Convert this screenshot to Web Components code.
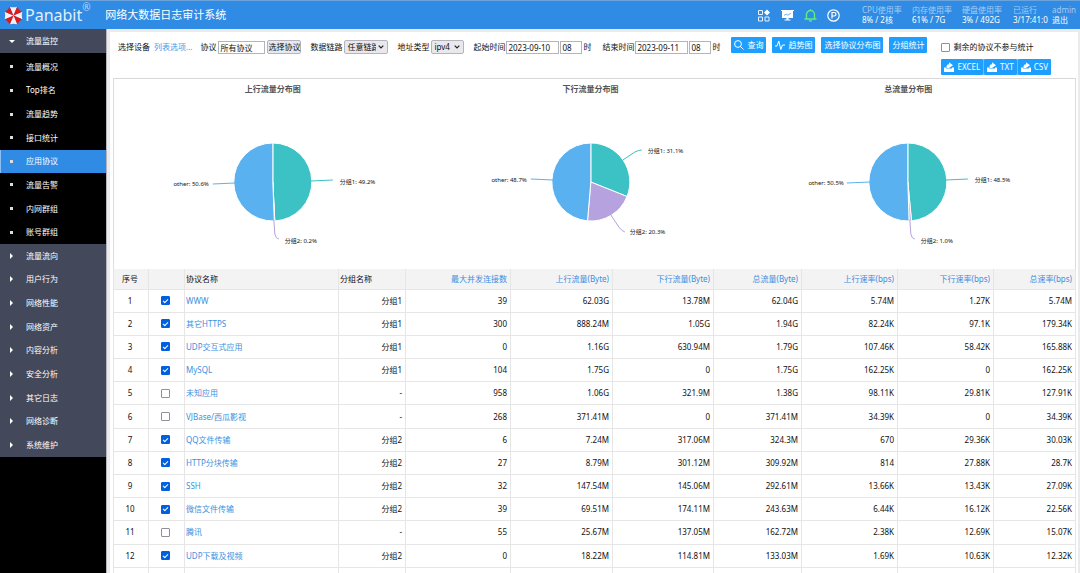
<!DOCTYPE html>
<html lang="zh-CN">
<head>
<meta charset="UTF-8">
<title>网络大数据日志审计系统</title>
<style>
    body {
        margin: 0;
        height: 100vh;
        overflow: hidden;
        font-family: "Noto Sans", "Noto Sans CJK SC", sans-serif;
        font-size: 8px;
        line-height: 12px;
        color: #111;
        background: #ebebee;
    }
</style>
</head>
<body>
<audit-app></audit-app>

<script>
class AuditApp extends HTMLElement {
    constructor() {
        super();
        this.attachShadow({ mode: 'open' });
        this.shadowRoot.innerHTML = `
            <style>
                :host {
                    display: flex;
                    flex-direction: column;
                    height: 100%;
                }
                .body {
                    display: flex;
                    flex: 1;
                    min-height: 0;
                }
                main {
                    flex: 1;
                    min-width: 0;
                    margin: 3px 2px 0 3px;
                    padding: 0 2px 0 3px;
                    background: #fff;
                    overflow: hidden;
                }
                .charts {
                    display: flex;
                    border: 1px solid #ddd;
                    border-top-color: #d8d8d8;
                    border-bottom: none;
                    padding-right: 8px;
                }
                pie-chart { flex: 1; }
            </style>
            <app-header></app-header>
            <div class="body">
                <side-menu></side-menu>
                <main>
                    <filter-bar></filter-bar>
                    <section class="charts">
                        <pie-chart data-key="up">上行流量分布图</pie-chart>
                        <pie-chart data-key="down">下行流量分布图</pie-chart>
                        <pie-chart data-key="total">总流量分布图</pie-chart>
                    </section>
                    <protocol-table></protocol-table>
                </main>
            </div>
        `;
    }
}

class AppHeader extends HTMLElement {
    constructor() {
        super();
        this.attachShadow({ mode: 'open' });
        this.render();
    }

    get logo() {
        // umbrella: eight wedges, alternating red and white
        const point = (deg, r) => {
            const a = deg * Math.PI / 180;
            return `${(10 + r * Math.cos(a)).toFixed(2)} ${(10 + r * Math.sin(a)).toFixed(2)}`;
        };
        let wedges = '';
        for (let i = 0; i < 8; i++) {
            const from = i * 45 - 22.5;
            wedges += `<path d="M10 10L${point(from, 10)}Q${point(from + 22.5, 8)} ${point(from + 45, 10)}Z" fill="${i % 2 ? '#e01818' : '#f6f0f2'}"/>`;
        }
        return `<svg class="logo" viewBox="0 0 20 20">${wedges}</svg>`;
    }

    render() {
        this.shadowRoot.innerHTML = `
            <style>
                :host {
                    display: flex;
                    align-items: center;
                    box-sizing: border-box;
                    height: 29px;
                    padding: 0 4px;
                    border-top: 1px solid #6ca5dd;
                    background: #2f8be4;
                    color: #fff;
                }
                .logo { width: 19px; height: 19px; margin-right: 2px; }
                .brand { font-size: 16px; line-height: 24px; color: #e3effc; }
                sup { align-self: flex-start; width: 23px; font-size: 10px; color: #b9d7f7; }
                h1 { margin: 0; font-size: 11px; font-weight: 400; line-height: 16px; }
                .icons { display: flex; align-items: center; gap: 10px; margin: 0 22px 0 auto; }
                .icons svg { display: block; width: 13px; height: 13px; }
                dl {
                    display: grid;
                    grid-template-columns: 50px 50px 51px 39px 24px;
                    margin: 0;
                    line-height: 10px;
                    white-space: nowrap;
                }
                dt { color: #a6cbf3; }
                dd { margin: 0; }
                a { color: inherit; text-decoration: none; }
            </style>
            ${this.logo}
            <span class="brand">Panabit</span><sup>®</sup>
            <h1>网络大数据日志审计系统</h1>
            <div class="icons">
                <svg viewBox="0 0 13 13" fill="none" stroke="#e6f1fd">
                    <path d="M.5 1.500h4v4h-4zM.5 8h4v4h-4zM7 8h4v4H7z"/>
                    <path d="M9 .5l3 3-3 3-3-3z" fill="#fff" stroke="none"/>
                </svg>
                <svg viewBox="0 0 13 13">
                    <path d="M0 1h13v1h-1v7H7.500v1.500H9.500v1h-6v-1h2V9H1V2H0z" fill="#fff"/>
                    <path d="M3 6.500l2-1.500 2 1.200 3-2.200" fill="none" stroke="#75b2ee"/>
                </svg>
                <svg viewBox="0 0 13 13" fill="none" stroke="#5df07c" stroke-width="1.400">
                    <path d="M.5 10h12M2.500 10V5.500a4 4 0 0 1 8 0V10M6.500 1.500V.3M5 11.500q1.500 1 3 0"/>
                </svg>
                <svg viewBox="0 0 13 13" fill="none" stroke="#fff" stroke-width="1.200">
                    <circle cx="6.500" cy="6.500" r="5.700"/>
                    <path d="M5 9.500v-6h2.200a1.700 1.700 0 0 1 0 3.500H5"/>
                </svg>
            </div>
            <dl>
                <dt>CPU使用率</dt><dt>内存使用率</dt><dt>硬盘使用率</dt><dt>已运行</dt><dt>admin</dt>
                <dd>8% / 2核</dd><dd>61% / 7G</dd><dd>3% / 492G</dd><dd>3/17:41:0</dd><dd><a href="#">退出</a></dd>
            </dl>
        `;
    }
}

class SideMenu extends HTMLElement {
    constructor() {
        super();
        this.attachShadow({ mode: 'open' });
        this.active = '应用协议';
        this.pages = ['流量概况', 'Top排名', '流量趋势', '接口统计', '应用协议', '流量告警', '内网群组', '账号群组'];
        this.groups = ['流量流向', '用户行为', '网络性能', '网络资产', '内容分析', '安全分析', '其它日志', '网络诊断', '系统维护'];
        this.render();
    }

    link(text, icon) {
        return `<a href="#" class="${text === this.active ? 'active' : ''}"><i class="${icon}"></i>${text}</a>`;
    }

    render() {
        this.shadowRoot.innerHTML = `
            <style>
                :host {
                    display: block;
                    flex: none;
                    width: 107px;
                    background: #000;
                    border-right: 1px solid #b5b5bd;
                    box-sizing: border-box;
                }
                a {
                    display: flex;
                    align-items: center;
                    color: #fff;
                    text-decoration: none;
                }
                .open, .groups { background: #43495b; }
                .open a { height: 24px; }
                .sub, .groups { display: grid; grid-auto-rows: 1fr; }
                .sub { box-sizing: border-box; height: 191px; padding-top: 2px; }
                .groups { height: 213px; }
                .active { background: #2f8be4; box-shadow: inset 1px 0 #8cc0f4; }
                i { box-sizing: border-box; width: 26px; padding-left: 9px; }
                i::before { content: ""; display: block; width: 0; }
                .down::before { border: 3px solid transparent; border-top-color: #fff; border-bottom: none; }
                .right::before { margin-left: 1px; border: 3px solid transparent; border-left-color: #fff; border-right: none; }
                .dot::before { width: 3px; height: 3px; margin-left: 1px; background: #ddd; }
            </style>
            <nav>
                <div class="open">${this.link('流量监控', 'down')}</div>
                <div class="sub">${this.pages.map(t => this.link(t, 'dot')).join('')}</div>
                <div class="groups">${this.groups.map(t => this.link(t, 'right')).join('')}</div>
            </nav>
        `;
    }
}

class ActionButton extends HTMLElement {
    constructor() {
        super();
        this.attachShadow({ mode: 'open' });
        this.shadowRoot.innerHTML = `
            <style>
                :host { display: inline-flex; }
                button {
                    display: flex;
                    align-items: center;
                    justify-content: center;
                    gap: 3px;
                    width: 100%;
                    height: 16px;
                    padding: 0 3px;
                    border: none;
                    border-radius: 1px;
                    background: #1e9fff;
                    color: #fff;
                    font: inherit;
                    white-space: nowrap;
                }
            </style>
            <button type="button"><slot name="icon"></slot><slot></slot></button>
        `;
    }
}

class FilterBar extends HTMLElement {
    constructor() {
        super();
        this.attachShadow({ mode: 'open' });
        this.render();
    }

    select(id, text) {
        return `
            <span class="select">
                <select id="${id}"><option>${text}</option></select>
                <svg viewBox="0 0 6 4"><path d="M.7.7L3 3 5.300.7" fill="none" stroke="#222" stroke-width="1.200"/></svg>
            </span>`;
    }

    exportButton(text) {
        return `
            <action-button>
                <svg slot="icon" viewBox="0 0 10 10" fill="#fff"><path d="M0 5.500h2v1h6v-1h2V10H0zM2.500 6V4.500Q2.500 2.200 5 2.200V.2L9 3.200 5 6z"/></svg>
                ${text}
            </action-button>`;
    }

    render() {
        this.shadowRoot.innerHTML = `
            <style>
                :host {
                    display: flex;
                    align-items: flex-start;
                    height: 46px;
                    padding: 5px 0 0 5px;
                    box-sizing: border-box;
                    white-space: nowrap;
                }
                .group, .actions {
                    display: flex;
                    align-items: center;
                    flex: none;
                    gap: 2px;
                    height: 20px;
                    margin-right: 9px;
                }
                .group.first { gap: 4px; margin-right: 8px; }
                .group.time { gap: 1px; margin-right: 11px; }
                .actions { height: 16px; gap: 6px; margin-right: 14px; }
                a { color: #4a9ae8; text-decoration: none; }
                input[type=text], select, .plain {
                    box-sizing: border-box;
                    height: 13px;
                    margin: 0;
                    padding: 0 1px;
                    border: 1px solid #b4b4bc;
                    font: inherit;
                    color: inherit;
                    background: #fff;
                }
                .plain, select { border-radius: 2px; background: #e9e9ed; }
                .plain { width: 34px; height: 14px; line-height: 10px; padding: 0; }
                .select { display: grid; align-items: center; }
                .select > * { grid-area: 1 / 1; }
                .select svg { justify-self: end; width: 6px; height: 4px; margin-right: 4px; pointer-events: none; }
                select { appearance: none; height: 14px; padding: 0 11px 0 2px; overflow: hidden; }
                #link { width: 44px; }
                #addr { width: 33px; }
                #proto { width: 47px; }
                .date { width: 53px; }
                .hour { width: 22px; }
                svg[slot=icon] { width: 10px; height: 10px; }
                .side { display: flex; flex-direction: column; gap: 2px; }
                .check { display: flex; align-items: center; gap: 3px; height: 20px; }
                .check input {
                    appearance: none;
                    width: 9px;
                    height: 9px;
                    margin: 0;
                    border: 1px solid #8f8f9d;
                    border-radius: 1px;
                }
                .exports { display: flex; }
                .exports action-button + action-button { border-left: 1px solid #67bcff; }
            </style>
            <div class="group first">选择设备 <a href="#">列表选项...</a></div>
            <div class="group">
                <label for="proto">协议</label>
                <input type="text" id="proto" value="所有协议">
                <button type="button" class="plain">选择协议</button>
            </div>
            <div class="group"><label for="link">数据链路</label>${this.select('link', '任意链路')}</div>
            <div class="group"><label for="addr">地址类型</label>${this.select('addr', 'ipv4')}</div>
            <div class="group time">
                <label for="from">起始时间</label>
                <input type="text" id="from" class="date" value="2023-09-10">
                <input type="text" class="hour" id="from-hour" value="08"><label for="from-hour">时</label>
            </div>
            <div class="group time">
                <label for="to">结束时间</label>
                <input type="text" id="to" class="date" value="2023-09-11">
                <input type="text" class="hour" id="to-hour" value="08"><label for="to-hour">时</label>
            </div>
            <div class="actions">
                <action-button><svg slot="icon" viewBox="0 0 10 10" fill="none" stroke="#fff"><circle cx="4" cy="4" r="3.400"/><path d="M6.500 6.500l3 3"/></svg>查询</action-button>
                <action-button><svg slot="icon" viewBox="0 0 10 10" fill="none" stroke="#fff"><path d="M0 6h2l1.800-5 2 8.500L7.500 5H10"/></svg>趋势图</action-button>
                <action-button>选择协议分布图</action-button>
                <action-button>分组统计</action-button>
            </div>
            <div class="side">
                <label class="check"><input type="checkbox">剩余的协议不参与统计</label>
                <div class="exports">${['EXCEL', 'TXT', 'CSV'].map(t => this.exportButton(t)).join('')}</div>
            </div>
        `;
    }
}

// leader lines and label anchors are relative to the centre of the pie
const PIES = {
    up: [
        { name: '分组1', value: 49.2, color: '#3cc1c4', line: 'M38 -1L60 -2', x: 67, y: 0 },
        { name: '分组2', value: 0.2, color: '#b6a2de', line: 'M1 38L2 52Q3 57 6 57', x: 12, y: 59 },
        { name: 'other', value: 50.6, color: '#5ab1ef', line: 'M-38 1L-60 2', x: -64, y: 2 }
    ],
    down: [
        { name: '分组1', value: 31.1, color: '#3cc1c4', line: 'M32 -22L44 -30Q48 -32 51 -32', x: 57, y: -31 },
        { name: '分组2', value: 20.3, color: '#b6a2de', line: 'M20 33L28 45Q31 49 34 50', x: 39, y: 50 },
        { name: 'other', value: 48.7, color: '#5ab1ef', line: 'M-38 -2L-60 -3', x: -64, y: -2 }
    ],
    total: [
        { name: '分组1', value: 48.5, color: '#3cc1c4', line: 'M38 -2L60 -3', x: 67, y: -2 },
        { name: '分组2', value: 1.0, color: '#b6a2de', line: 'M2 38L3 52Q4 57 7 57', x: 13, y: 59 },
        { name: 'other', value: 50.5, color: '#5ab1ef', line: 'M-38 0L-61 1', x: -64, y: 1 }
    ]
};

class PieChart extends HTMLElement {
    constructor() {
        super();
        this.attachShadow({ mode: 'open' });
    }

    connectedCallback() {
        this.render(PIES[this.dataset.key]);
    }

    slice(start, end, color) {
        const r = 39;
        const at = v => {
            const a = v * 2 * Math.PI;
            return `${(r * Math.sin(a)).toFixed(2)} ${(-r * Math.cos(a)).toFixed(2)}`;
        };
        return `<path d="M0 0L${at(start)}A${r} ${r} 0 ${end - start > 0.5 ? 1 : 0} 1 ${at(end)}Z" fill="${color}" stroke="#fff"/>`;
    }

    render(items) {
        const total = items.reduce((sum, item) => sum + item.value, 0);
        let start = 0;
        let slices = '';
        let labels = '';
        items.forEach(item => {
            const end = start + item.value / total;
            slices += this.slice(start, end, item.color);
            labels += `
                <path d="${item.line}" fill="none" stroke="${item.color}"/>
                <text x="${item.x}" y="${item.y + 2}" text-anchor="${item.x < 0 ? 'end' : 'start'}">${item.name}: ${item.value.toFixed(1)}%</text>`;
            start = end;
        });
        this.shadowRoot.innerHTML = `
            <style>
                :host { display: block; }
                h2 { margin: 0; font-size: 8px; line-height: 20px; text-align: center; color: #555; }
                svg { display: block; width: 100%; height: 170px; }
                text { font-size: 6px; fill: #111; }
            </style>
            <h2><slot></slot></h2>
            <svg viewBox="-158 -83 316 170">${slices}${labels}</svg>
        `;
    }
}

const COLUMNS = ['最大并发连接数', '上行流量(Byte)', '下行流量(Byte)', '总流量(Byte)', '上行速率(bps)', '下行速率(bps)', '总速率(bps)'];

const ROWS = [
    ['WWW', '分组1', '39', '62.03G', '13.78M', '62.04G', '5.74M', '1.27K', '5.74M'],
    ['其它HTTPS', '分组1', '300', '888.24M', '1.05G', '1.94G', '82.24K', '97.1K', '179.34K'],
    ['UDP交互式应用', '分组1', '0', '1.16G', '630.94M', '1.79G', '107.46K', '58.42K', '165.88K'],
    ['MySQL', '分组1', '104', '1.75G', '0', '1.75G', '162.25K', '0', '162.25K'],
    ['未知应用', '-', '958', '1.06G', '321.9M', '1.38G', '98.11K', '29.81K', '127.91K'],
    ['VJBase/西瓜影视', '-', '268', '371.41M', '0', '371.41M', '34.39K', '0', '34.39K'],
    ['QQ文件传输', '分组2', '6', '7.24M', '317.06M', '324.3M', '670', '29.36K', '30.03K'],
    ['HTTP分块传输', '分组2', '27', '8.79M', '301.12M', '309.92M', '814', '27.88K', '28.7K'],
    ['SSH', '分组2', '32', '147.54M', '145.06M', '292.61M', '13.66K', '13.43K', '27.09K'],
    ['微信文件传输', '分组2', '39', '69.51M', '174.11M', '243.63M', '6.44K', '16.12K', '22.56K'],
    ['腾讯', '-', '55', '25.67M', '137.05M', '162.72M', '2.38K', '12.69K', '15.07K'],
    ['UDP下载及视频', '分组2', '0', '18.22M', '114.81M', '133.03M', '1.69K', '10.63K', '12.32K']
];

class ProtocolTable extends HTMLElement {
    constructor() {
        super();
        this.attachShadow({ mode: 'open' });
        this.render();
    }

    row([name, group, ...values], i) {
        return `
            <tr>
                <td class="center">${i + 1}</td>
                <td><input type="checkbox" aria-label="${name}" ${group === '-' ? '' : 'checked'}></td>
                <td><a href="#">${name}</a></td>
                <td class="num">${group}</td>
                ${values.map(v => `<td class="num">${v}</td>`).join('')}
            </tr>`;
    }

    render() {
        const widths = [35, 36, 154, 67, 105, 102, 101, 88, 96, 96, 82];
        this.shadowRoot.innerHTML = `
            <style>
                :host { display: block; }
                table {
                    width: 100%;
                    height: 322px;
                    table-layout: fixed;
                    border-collapse: collapse;
                }
                th, td {
                    box-sizing: border-box;
                    padding: 0 3px 0 1px;
                    border: 1px solid #e6e6e6;
                    text-align: left;
                    font-weight: 400;
                    white-space: nowrap;
                }
                th { height: 20px; background: #f3f3f3; border-top: none; }
                td { height: 23px; }
                .center { text-align: center; }
                .num { text-align: right; }
                a { color: #3d8fe0; text-decoration: none; }
                input {
                    appearance: none;
                    display: grid;
                    place-content: center;
                    box-sizing: border-box;
                    width: 9px;
                    height: 9px;
                    margin: 0 auto;
                    border: 1px solid #8f8f9d;
                    border-radius: 1px;
                }
                input:checked { border-color: #0060df; background: #0060df; }
                input:checked::after {
                    content: "";
                    width: 2px;
                    height: 4px;
                    margin-bottom: 1px;
                    border: solid #fff;
                    border-width: 0 1px 1px 0;
                    transform: rotate(45deg);
                }
            </style>
            <table>
                <colgroup>${widths.map(w => `<col style="width: ${w}px">`).join('')}</colgroup>
                <thead>
                    <tr>
                        <th class="center">序号</th><th></th><th>协议名称</th><th>分组名称</th>
                        ${COLUMNS.map(c => `<th class="num"><a href="#">${c}</a></th>`).join('')}
                    </tr>
                </thead>
                <tbody>
                    ${ROWS.map((r, i) => this.row(r, i)).join('')}
                    <tr>${'<td></td>'.repeat(11)}</tr>
                </tbody>
            </table>
        `;
    }
}

customElements.define('action-button', ActionButton);
customElements.define('app-header', AppHeader);
customElements.define('side-menu', SideMenu);
customElements.define('filter-bar', FilterBar);
customElements.define('pie-chart', PieChart);
customElements.define('protocol-table', ProtocolTable);
customElements.define('audit-app', AuditApp);
</script>
</body>
</html>
